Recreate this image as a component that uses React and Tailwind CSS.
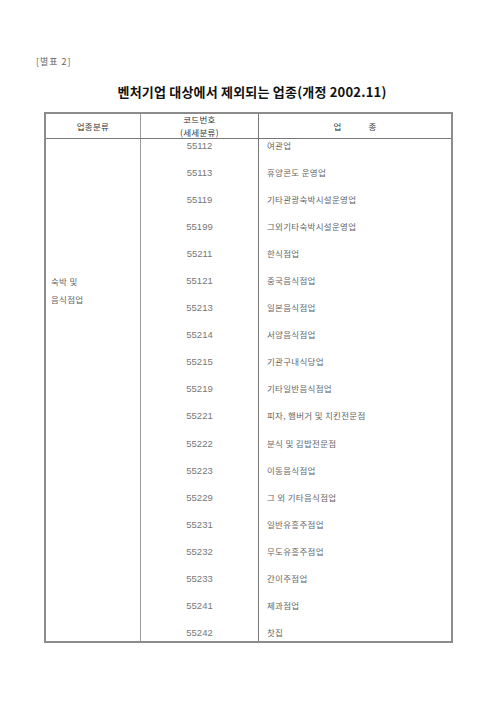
import React from 'react';

const rows = [
  ['55112', '여관업'],
  ['55113', '휴양콘도 운영업'],
  ['55119', '기타관광숙박시설운영업'],
  ['55199', '그외기타숙박시설운영업'],
  ['55211', '한식점업'],
  ['55121', '중국음식점업'],
  ['55213', '일본음식점업'],
  ['55214', '서양음식점업'],
  ['55215', '기관구내식당업'],
  ['55219', '기타일반음식점업'],
  ['55221', '피자, 햄버거 및 치킨전문점'],
  ['55222', '분식 및 김밥전문점'],
  ['55223', '이동음식점업'],
  ['55229', '그 외 기타음식점업'],
  ['55231', '일반유흥주점업'],
  ['55232', '무도유흥주점업'],
  ['55233', '간이주점업'],
  ['55241', '제과점업'],
  ['55242', '찻집'],
];

const font = { fontFamily: '"Noto Sans CJK KR", "Liberation Sans", sans-serif' };

export default function App() {
  return (
    <div className="min-h-[713px] w-[504px] bg-white pt-[56px]" style={font}>
      {/* caption */}
      <div className="ml-[36px] text-[9px] leading-[12px] text-[#666] tracking-[1px]">[별표 2]</div>

      {/* title */}
      <h1 className="mt-[16px] text-center text-[13px] font-bold leading-[16px] text-[#111] tracking-[0.2px]">
        벤처기업 대상에서 제외되는 업종(개정 2002.11)
      </h1>

      {/* table */}
      <div className="ml-[44px] mt-[12px] w-[409px] border-2 border-[#8c8c8c]">
        {/* header */}
        <div className="flex h-[25px] border-b border-[#777] text-[8.5px] tracking-[0.3px] text-[#333]">
          <div className="flex w-[95px] items-center justify-center border-r border-[#999]">업종분류</div>
          <div className="flex w-[118px] flex-col items-center justify-center border-r border-[#777] leading-[13px]">
            <span>코드번호</span>
            <span>(세세분류)</span>
          </div>
          <div className="flex flex-1 items-center justify-center gap-[27px]">
            <span>업</span>
            <span>종</span>
          </div>
        </div>

        {/* body */}
        <div className="flex text-[8.5px] tracking-[0.3px] text-[#666]">
          <div className="w-[95px] border-r border-[#999] pl-[5px] pt-[133px] leading-[18px]">
            <div>숙박 및</div>
            <div>음식점업</div>
          </div>
          <div className="w-[118px] border-r border-[#777]">
            {rows.map(([code], i) => (
              <div
                key={i}
                className={`${i === rows.length - 1 ? 'h-[15px]' : 'h-[27.06px]'} text-center text-[9.5px] leading-[13px] tracking-normal text-[#777]`}
                style={{ fontFamily: '"Liberation Sans", sans-serif' }}
              >
                {code}
              </div>
            ))}
          </div>
          <div className="-mt-[1px] flex-1 pl-[8px]">
            {rows.map(([, name], i) => (
              <div key={i} className={`${i === rows.length - 1 ? 'h-[14px]' : 'h-[27.06px]'} leading-[14px]`}>
                {name}
              </div>
            ))}
          </div>
        </div>
      </div>
    </div>
  );
}
